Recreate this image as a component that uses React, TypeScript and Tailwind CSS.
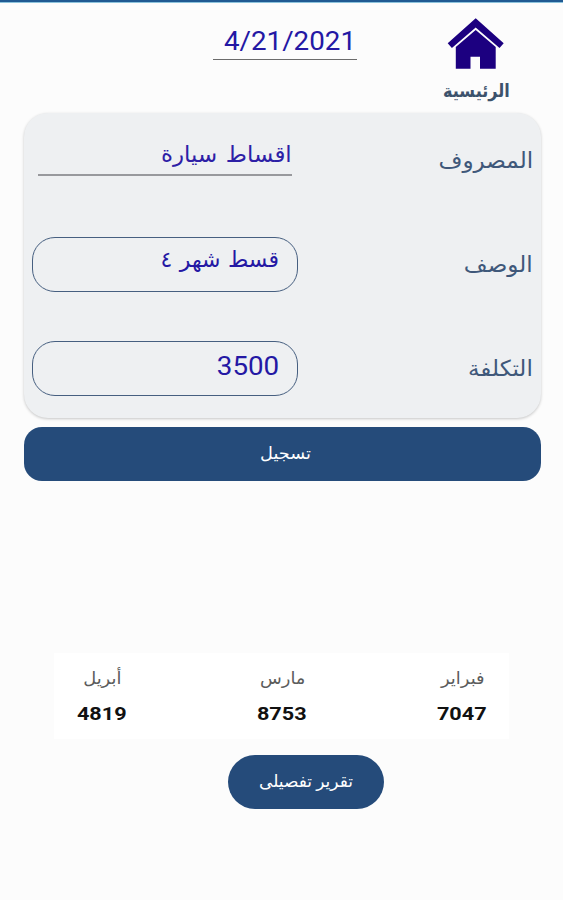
const months = [
  { name: "فبراير", total: "7047" },
  { name: "مارس", total: "8753" },
  { name: "أبريل", total: "4819" },
];

const HomeIcon = () => (
  <svg width="58" height="52" viewBox="0 0 58 52" fill="#1c0080">
    <path d="M28.700 0.300 L56.700 25.300 L52.500 30 L28.700 9.600 L4.900 30 L0.700 25.300 Z" />
    <path d="M28.700 11.900 L48.700 29 V50.800 H33 V38.700 H23.500 V50.800 H8.800 V29 Z" />
  </svg>
);

const Header = () => (
  <header className="flex h-[110px] justify-between pl-[213px] pr-[53px]">
    <div className="flex h-[57px] w-[144px] justify-end border-b border-[#6b6b6b] pt-[22px] pr-px" dir="ltr">
      <span className="origin-right scale-x-[1.11] text-[25px] leading-[34px] text-[#2418a4]">4/21/2021</span>
    </div>
    <a href="#" className="flex w-[68px] flex-col items-center pt-[15px]">
      <HomeIcon />
      <span className="mt-[9px] scale-x-[0.89] text-[18px] leading-[24px] font-bold whitespace-nowrap text-[#3c526c]">الرئيسية</span>
    </a>
  </header>
);

const FieldLabel = ({ children }: { children: string }) => (
  <label className="inline-block origin-right scale-x-[1.05] text-[22px] leading-[32px] text-[#3f587a]">{children}</label>
);

const ExpenseForm = () => (
  <form className="pr-[22px] pl-[24px]">
    <div className="h-[305px] rounded-[24px] bg-[#eef0f2] shadow-[0_1px_3px_rgba(0,0,0,0.22)]">
      <div dir="rtl" className="flex h-[124px] justify-between pr-[8px] pl-[14px]">
        <div className="pt-[32px]">
          <FieldLabel>المصروف</FieldLabel>
        </div>
        <div className="h-[63px] w-[254px] border-b-2 border-[#98999d] pt-[26px] text-[#2d20a6]">
          <span className="inline-block origin-right scale-x-[1.04] text-[22px] leading-[32px] [word-spacing:3px]">اقساط سيارة</span>
        </div>
      </div>
      <div dir="rtl" className="flex h-[104px] justify-between pr-[8px] pl-[8px]">
        <div className="pt-[12px]">
          <FieldLabel>الوصف</FieldLabel>
        </div>
        <div className="h-[55px] w-[266px] rounded-[23px] border border-[#465f80] pt-[6px] pr-[18px] text-[22px] leading-[32px] text-[#2418a4] [word-spacing:2px]">
          قسط شهر ٤
        </div>
      </div>
      <div dir="rtl" className="flex justify-between pr-[8px] pl-[8px]">
        <div className="pt-[12px]">
          <FieldLabel>التكلفة</FieldLabel>
        </div>
        <div className="h-[55px] w-[266px] rounded-[23px] border border-[#465f80] pt-[8px] pr-[18px]">
          <span className="inline-block origin-right scale-x-[1.11] text-[25px] leading-[34px] text-[#2418a4]">3500</span>
        </div>
      </div>
    </div>
    <button type="button" className="mt-[9px] flex h-[54px] w-full justify-center rounded-[18px] bg-[#254b7a] pt-[14px] pl-[6px] text-[17px] leading-[24px] text-white">
      <span className="scale-x-[1.04]">تسجيل</span>
    </button>
  </form>
);

const MonthlyTotals = () => (
  <section dir="rtl" className="mx-[54px] mt-[172px] flex h-[86px] justify-between bg-white">
    {months.map((month) => (
      <div key={month.name} className="flex w-[95px] flex-col items-center pt-[12px]">
        <span className="pl-[2px] scale-x-[1.05] text-[17px] leading-[26px] text-[#5c5c5c]">{month.name}</span>
        <span className="mt-[10px] scale-x-[1.14] text-[19px] leading-[26px] font-bold text-[#111]">{month.total}</span>
      </div>
    ))}
  </section>
);

const App = () => {
  return (
    <main className="h-[900px] w-[563px] overflow-hidden bg-[#fcfcfc] font-['Roboto','DejaVu_Sans',sans-serif]">
      <div className="h-[3px] border-b border-[#8cc3dc] bg-[#205a92]" />
      <Header />
      <ExpenseForm />
      <MonthlyTotals />
      <button type="button" className="mt-[16px] ml-[228px] flex h-[54px] w-[156px] justify-center rounded-full bg-[#254b7a] pt-[14px] text-[17px] leading-[24px] text-white">
        تقرير تفصيلى
      </button>
    </main>
  );
};

export default App;
